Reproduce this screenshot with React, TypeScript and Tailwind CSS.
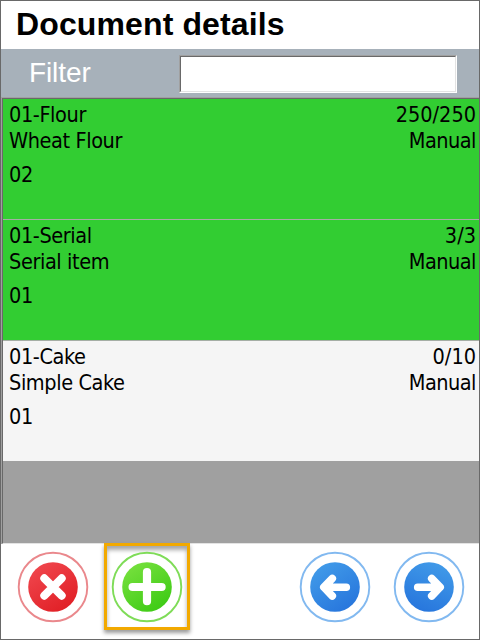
import type { ReactNode } from "react";

type Item = { code: string; name: string; lot: string; qty: string; mode: string; done: boolean };

const items: Item[] = [
  { code: "01-Flour", name: "Wheat Flour", lot: "02", qty: "250/250", mode: "Manual", done: true },
  { code: "01-Serial", name: "Serial item", lot: "01", qty: "3/3", mode: "Manual", done: true },
  { code: "01-Cake", name: "Simple Cake", lot: "01", qty: "0/10", mode: "Manual", done: false },
];

function Row({ item, last }: { item: Item; last: boolean }) {
  return (
    <div
      className={`flex h-[121px] shrink-0 justify-between border-b pt-[3px] pl-[6px] pr-[3px] ${
        item.done ? "bg-[#32cd32]" : "bg-[#f5f5f5]"
      } ${last ? "border-[#a0a0a0]" : "border-[#a5aea5]"}`}
    >
      <div className="flex flex-col">
        <span>{item.code}</span>
        <span>{item.name}</span>
        <span className="mt-2">{item.lot}</span>
      </div>
      <div className="flex flex-col items-end">
        <span className="tracking-[0px]">{item.qty}</span>
        <span className="tracking-[-0.5px]">{item.mode}</span>
      </div>
    </div>
  );
}

function RoundButton({
  id,
  label,
  ring,
  from,
  to,
  up,
  children,
}: {
  id: string;
  label: string;
  ring: string;
  from: string;
  to: string;
  up?: boolean;
  children: ReactNode;
}) {
  return (
    <button aria-label={label} className="block h-[72px] w-[72px]">
      <svg width="72" height="72" viewBox="-36 -36 72 72" fill="none">
        <defs>
          <linearGradient id={id} x1="0.2" y1={up ? "1" : "0.1"} x2={up ? "0.6" : "0.8"} y2={up ? "0" : "1"}>
            <stop stopColor={from} />
            <stop offset="1" stopColor={to} />
          </linearGradient>
        </defs>
        <circle r="34.3" stroke={ring} strokeWidth="1.9" />
        <circle r="24.8" fill={`url(#${id})`} />
        <g stroke="white" strokeLinecap="round" strokeLinejoin="round">
          {children}
        </g>
      </svg>
    </button>
  );
}

export default function App() {
  return (
    <div className="flex h-[640px] w-[480px] flex-col overflow-hidden border border-[#696969] bg-white">
      <h1 className="h-12 shrink-0 pl-[15px] font-['Liberation_Sans',Arial,sans-serif] text-[32px] leading-[46px] font-bold tracking-[0.12px] whitespace-nowrap text-black">
        Document details
      </h1>
      <div className="flex h-12 shrink-0 items-start bg-[#a7b1ba]">
        <label
          htmlFor="filter"
          className="w-[178px] pl-[28px] font-['Liberation_Sans',Arial,sans-serif] text-[28px] leading-[47px] tracking-[-0.1px] text-white"
        >
          Filter
        </label>
        <div className="mt-[6px] h-[38px] w-[278px] border border-t-[#a0a0a0] border-r-white border-b-white border-l-[#a0a0a0]">
          <input
            id="filter"
            className="block h-full w-full border border-t-[#696969] border-r-[#e3e3e3] border-b-[#e3e3e3] border-l-[#696969] bg-white px-2 outline-none"
          />
        </div>
      </div>
      <div className="h-[447px] shrink-0 border-t border-l border-[#a0a0a0]">
        <div className="flex h-[446px] flex-col border-t border-b border-l border-t-[#696969] border-b-[#e3e3e3] border-l-[#696969] bg-[#a0a0a0] font-['DejaVu_Sans_Condensed','DejaVu_Sans',sans-serif] text-[21.5px] leading-[26px] tracking-[-0.4px] whitespace-nowrap text-black [font-stretch:condensed]">
          {items.map((item, i) => (
            <Row key={item.code} item={item} last={i === items.length - 1} />
          ))}
        </div>
      </div>
      <div className="flex h-[95px] shrink-0 items-start pl-4">
        <div className="mt-[7px]">
          <RoundButton id="cancel" label="Cancel" ring="#ea888c" from="#ef444b" to="#e01e24">
            <path d="M-8.7 -8.7L8.7 8.7M8.7 -8.7L-8.7 8.7" strokeWidth="8" />
          </RoundButton>
        </div>
        <div className="-mt-px ml-[15px] h-[87px] w-[86px] border-[3px] border-[#f2a900] pt-[5px] pl-[4px] shadow-[0_3px_4px_rgba(0,0,0,0.4),inset_0_4px_4px_rgba(0,0,0,0.35)]">
          <RoundButton id="add" label="Add" ring="#7fdc58" from="#73df3b" to="#3bca13">
            <path d="M-14.4 0H14.6M0 -15V14.2" strokeWidth="8.2" />
          </RoundButton>
        </div>
        <div className="mt-[7px] ml-[109px]">
          <RoundButton id="back" label="Back" ring="#82b9f0" from="#4099e8" to="#2674dc">
            <path d="M-2.7 -8.5L-11.2 0.2L-2.7 9M-11 0.2H11.3" strokeWidth="7.6" />
          </RoundButton>
        </div>
        <div className="mt-[7px] ml-[22px]">
          <RoundButton id="next" label="Next" ring="#82b9f0" from="#2674dc" to="#4099e8" up>
            <path d="M2.7 -8.5L11.2 0.2L2.7 9M-11.3 0.2H11" strokeWidth="7.6" />
          </RoundButton>
        </div>
      </div>
    </div>
  );
}
